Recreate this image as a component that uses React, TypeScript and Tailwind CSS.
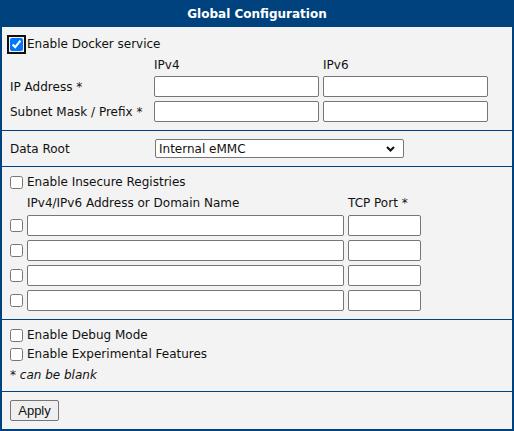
import React from 'react';

const font = { fontFamily: '"DejaVu Sans", Verdana, sans-serif' };

function Box({ checked = false, focused = false }: { checked?: boolean; focused?: boolean }) {
  return (
    <input
      type="checkbox"
      defaultChecked={checked}
      className={
        'm-0 h-[13px] w-[13px] shrink-0 ' +
        (focused ? 'rounded-[2px] outline-2 outline-offset-1 outline-[#101010]' : '')
      }
    />
  );
}

function TextInput({ className = '' }: { className?: string }) {
  return (
    <input
      type="text"
      className={
        'h-[21px] rounded-[2px] border border-[#767676] bg-white px-1 text-[12px] ' + className
      }
    />
  );
}

function Divider() {
  return <div className="h-px bg-[#00427e]" />;
}

export default function App() {
  return (
    <div
      className="flex h-[431px] w-[514px] flex-col border-x-2 border-b-2 border-[#00427e] bg-[#f3f3f3] text-[12px] text-[#111]"
      style={font}
    >
      {/* Title bar */}
      <div className="-mx-[2px] flex h-[27px] shrink-0 items-center justify-center bg-[#00427e] text-[12px] font-bold text-white">
        Global Configuration
      </div>

      {/* Docker service */}
      <div className="flex flex-col pb-[8px] pl-[8px] pt-[8px]">
        <label className="flex h-[18px] items-center gap-[4px]">
          <Box checked focused />
          <span>Enable Docker service</span>
        </label>
        <div className="mt-[2px] grid h-[20px] grid-cols-[140px_165px_165px] items-center gap-x-[4px]">
          <span />
          <span>IPv4</span>
          <span>IPv6</span>
        </div>
        <div className="mt-px flex flex-col gap-[4px]">
          <div className="grid grid-cols-[140px_165px_165px] items-center gap-x-[4px]">
            <span>IP Address *</span>
            <TextInput />
            <TextInput />
          </div>
          <div className="grid grid-cols-[140px_165px_165px] items-center gap-x-[4px]">
            <span>Subnet Mask / Prefix *</span>
            <TextInput />
            <TextInput />
          </div>
        </div>
      </div>
      <Divider />

      {/* Data root */}
      <div className="flex items-center py-[8px] pl-[8px]">
        <span className="w-[145px]">Data Root</span>
        <div className="flex h-[19px] w-[249px] items-center justify-between rounded-[2px] border border-[#767676] bg-white pl-[3px] pr-[8px]">
          <span>Internal eMMC</span>
          <svg width="9" height="6" viewBox="0 0 9 6">
            <path d="M1 1l3.5 3.5L8 1" fill="none" stroke="#111" strokeWidth="2" />
          </svg>
        </div>
      </div>
      <Divider />

      {/* Insecure registries */}
      <div className="flex flex-col pb-[8px] pl-[8px] pt-[7px]">
        <label className="flex h-[16px] items-center gap-[4px]">
          <Box />
          <span>Enable Insecure Registries</span>
        </label>
        <div className="mt-[4px] flex h-[18px] items-center pl-[17px]">
          <span className="w-[321px]">IPv4/IPv6 Address or Domain Name</span>
          <span>TCP Port *</span>
        </div>
        <div className="mt-[3px] flex flex-col gap-[4px]">
          {[0, 1, 2, 3].map(i => (
            <div key={i} className="flex items-center">
              <Box />
              <TextInput className="ml-[4px] w-[317px]" />
              <TextInput className="ml-[4px] w-[73px]" />
            </div>
          ))}
        </div>
      </div>
      <Divider />

      {/* Debug / experimental */}
      <div className="flex flex-col gap-[3px] pb-[8px] pl-[8px] pt-[7px]">
        <label className="flex h-[16px] items-center gap-[4px]">
          <Box />
          <span>Enable Debug Mode</span>
        </label>
        <label className="flex h-[16px] items-center gap-[4px]">
          <Box />
          <span>Enable Experimental Features</span>
        </label>
        <div className="mt-[2px] flex h-[16px] items-center italic">* can be blank</div>
      </div>
      <Divider />

      {/* Apply */}
      <div className="pl-[8px] pt-[8px]">
        <button
          className="h-[21px] w-[49px] rounded-[2px] border border-[#767676] bg-[#efefef] text-[13px]"
          style={{ fontFamily: '"Liberation Sans", Arial, sans-serif' }}
        >
          Apply
        </button>
      </div>
    </div>
  );
}
